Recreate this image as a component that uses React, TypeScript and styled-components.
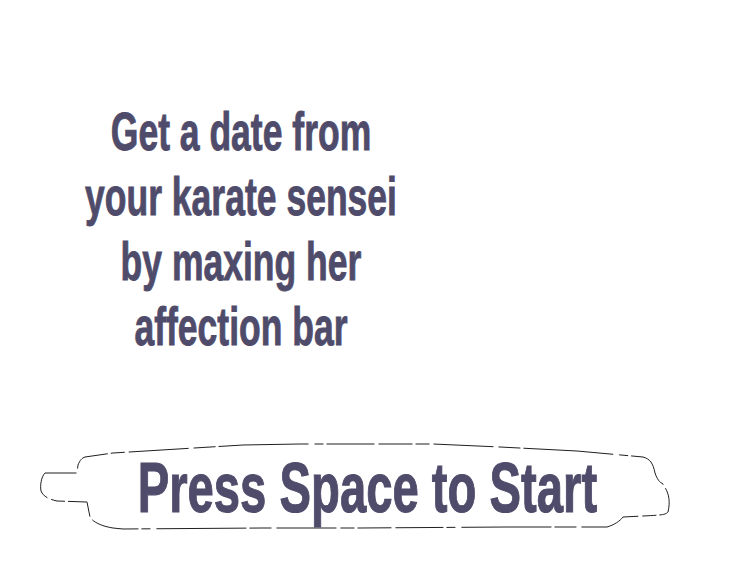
import React from "react";
import styled, { createGlobalStyle } from "styled-components";

const INK = "#4f4b6a";

const GlobalStyle = createGlobalStyle`
  html, body {
    margin: 0;
    padding: 0;
    background: #ffffff;
  }
  body {
    font-family: "Liberation Sans", Arial, sans-serif;
  }
`;

const App = () => {
  return (
    <>
      <GlobalStyle />
      <S.Screen>
        <S.Intro>
          <S.IntroLine>Get a date from</S.IntroLine>
          <S.IntroLine>your karate sensei</S.IntroLine>
          <S.IntroLine>by maxing her</S.IntroLine>
          <S.IntroLine>affection bar</S.IntroLine>
        </S.Intro>
        <S.StartPrompt>
          <S.Brush viewBox="0 0 630 90" preserveAspectRatio="none">
            <path
              d="M38 24 C40 19 42 17 45 16 L73 12 L203 4 L260 3 L393 3 L460 6 L537 10 L603 16
                 C610 18 613 22 615 32 C617 38 620 42 622 42 C628 50 631 58 628 71
                 C625 74 622 74 603 75 L583 76 C580 80 574 84 567 86 L467 86 L320 87 L223 87
                 L83 88 L73 87 C60 85 52 80 50 76 L47 61 L17 60 C8 58 3 55 1 50
                 C0 45 1 36 5 32 L17 32 L37 32 Z"
              fill="#ffffff"
              stroke="#1f1f24"
              strokeWidth="1"
              strokeDasharray="34 3 14 4 60 5 22 3 90 6 9 3 48 4"
            />
          </S.Brush>
          <S.StartText>Press Space to Start</S.StartText>
        </S.StartPrompt>
      </S.Screen>
    </>
  );
};

export default App;

const S = {
  Screen: styled.div`
    width: 750px;
    height: 563px;
    display: flex;
    flex-direction: column;
    overflow: hidden;
  `,
  Intro: styled.div`
    width: 482px;
    margin-top: 99px;
    display: flex;
    flex-direction: column;
    align-items: center;
    transform: scaleX(0.67);
    transform-origin: 241px 0;
  `,
  IntroLine: styled.div`
    font-size: 53px;
    line-height: 65px;
    font-weight: 700;
    color: ${INK};
    -webkit-text-stroke: 0.9px ${INK};
    white-space: nowrap;
  `,
  StartPrompt: styled.div`
    position: relative;
    width: 630px;
    height: 90px;
    margin-top: 82px;
    margin-left: 40px;
    box-sizing: border-box;
    padding: 12px 0 0 24px;
    display: flex;
    justify-content: center;
  `,
  Brush: styled.svg`
    position: absolute;
    inset: 0;
    width: 100%;
    height: 100%;
    overflow: visible;
  `,
  StartText: styled.div`
    position: relative;
    font-size: 70px;
    line-height: 70px;
    font-weight: 700;
    color: ${INK};
    -webkit-text-stroke: 1.1px ${INK};
    white-space: nowrap;
    transform: scaleX(0.675);
  `,
};
